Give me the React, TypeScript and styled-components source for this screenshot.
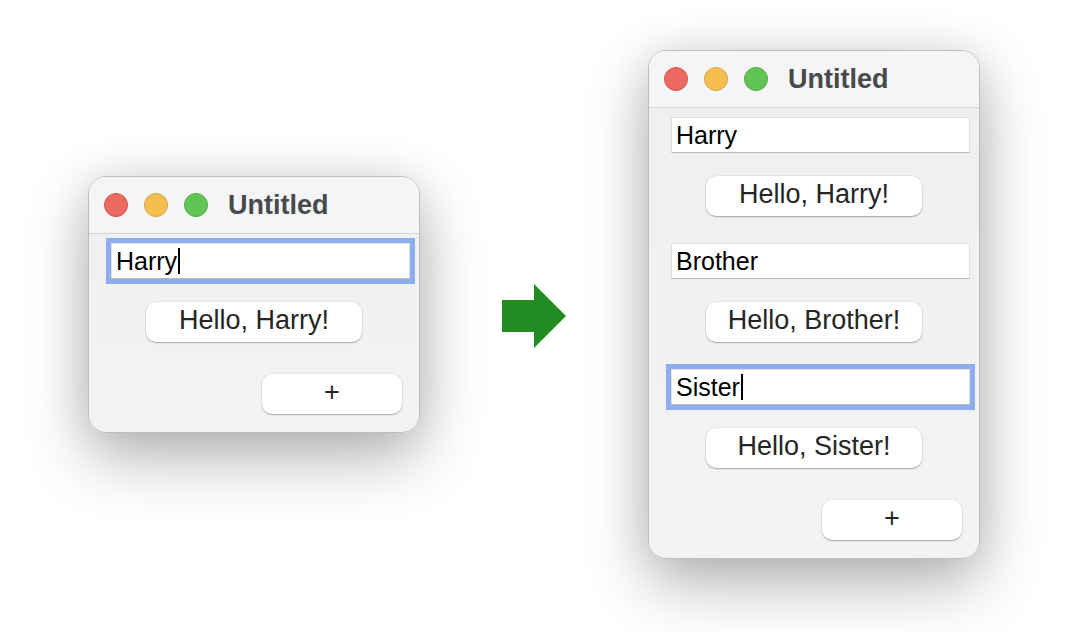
import React from "react";
import styled, {createGlobalStyle} from "styled-components";

const GlobalStyle = createGlobalStyle`
    html, body {
        margin: 0;
        padding: 0;
        background: #FFFFFF;
    }
`

const Stage = styled.div`
    display: flex;
    align-items: center;
    justify-content: center;
    gap: 82px;
    width: 1068px;
    height: 632px;
    background: #FFFFFF;
    font-family: "Liberation Sans", Arial, sans-serif;
`

const Window = styled.div`
    display: flex;
    flex-direction: column;
    width: 332px;
    margin-bottom: 23px;
    box-sizing: border-box;
    border: 1px solid #BDBDBD;
    border-radius: 18px;
    overflow: hidden;
    background: linear-gradient(#EEEFF1, #F2F3F4);
    box-shadow: 0 24px 64px rgba(0, 0, 0, 0.30), 0 0 40px rgba(0, 0, 0, 0.08);
`

const TitleBar = styled.div`
    display: flex;
    align-items: center;
    gap: 16px;
    height: 56px;
    padding-left: 15px;
    border-bottom: 1px solid #D3D4D6;
    background: #F4F5F6;
`

const Light = styled.span<{ $fill: string; $edge: string }>`
    width: 22px;
    height: 22px;
    border-radius: 50%;
    background: ${p => p.$fill};
    border: 1px solid ${p => p.$edge};
`

const Title = styled.span`
    margin-left: 4px;
    font-size: 27px;
    font-weight: bold;
    color: #48494B;
`

const Content = styled.div`
    display: flex;
    flex-direction: column;
    align-items: flex-start;
    padding: 9px 0 18px;
`

const Field = styled.div<{ $focused?: boolean }>`
    display: flex;
    align-items: center;
    box-sizing: border-box;
    width: 299px;
    height: 36px;
    margin-left: 22px;
    padding-left: 4px;
    background: #FFFFFF;
    border: 1px solid #DFDFDF;
    border-bottom-color: #B9B9B9;
    font-size: 25px;
    line-height: 34px;
    color: #000000;
    box-shadow: ${p => p.$focused ? "0 0 0 5px #8FACEE" : "none"};

    &:not(:first-child) {
        margin-top: 27px;
    }
`

const Caret = styled.span`
    width: 2px;
    height: 26px;
    margin-left: 1px;
    background: #000000;
`

const PushButton = styled.div<{ $wide?: boolean }>`
    box-sizing: border-box;
    width: ${p => p.$wide ? "216px" : "140px"};
    height: 40px;
    padding-bottom: 4px;
    border-radius: 10px;
    background: #FFFFFF;
    box-shadow: 0 1px 1.5px rgba(0, 0, 0, 0.28), 0 0 0 0.5px rgba(0, 0, 0, 0.08);
    font-size: 27px;
    line-height: 36px;
    text-align: center;
    color: #262626;
`

const GreetButton = styled(PushButton)`
    align-self: center;
    margin-top: 23px;
`

const AddButton = styled(PushButton)`
    align-self: flex-end;
    margin-top: 32px;
    margin-right: 17px;
`

const Arrow = styled.svg`
    display: block;
    flex: none;
`

type Entry = { name: string; focused?: boolean }

function AppWindow({entries}: { entries: Entry[] }) {
    return (
        <Window>
            <TitleBar>
                <Light $fill="#EC6A5F" $edge="#D45246"/>
                <Light $fill="#F5BF4F" $edge="#D9A23F"/>
                <Light $fill="#61C554" $edge="#51A83F"/>
                <Title>Untitled</Title>
            </TitleBar>
            <Content>
                {entries.map(e => (
                    <React.Fragment key={e.name}>
                        <Field $focused={e.focused}>
                            {e.name}
                            {e.focused && <Caret/>}
                        </Field>
                        <GreetButton $wide>Hello, {e.name}!</GreetButton>
                    </React.Fragment>
                ))}
                <AddButton>+</AddButton>
            </Content>
        </Window>
    )
}

export default function App() {
    return (
        <>
            <GlobalStyle/>
            <Stage>
                <AppWindow entries={[{name: "Harry", focused: true}]}/>
                <Arrow width="64" height="64" viewBox="0 0 64 64">
                    <polygon points="0,16 32,16 32,0 64,32 32,64 32,48 0,48" fill="#228B22"/>
                </Arrow>
                <AppWindow entries={[
                    {name: "Harry"},
                    {name: "Brother"},
                    {name: "Sister", focused: true},
                ]}/>
            </Stage>
        </>
    )
}
